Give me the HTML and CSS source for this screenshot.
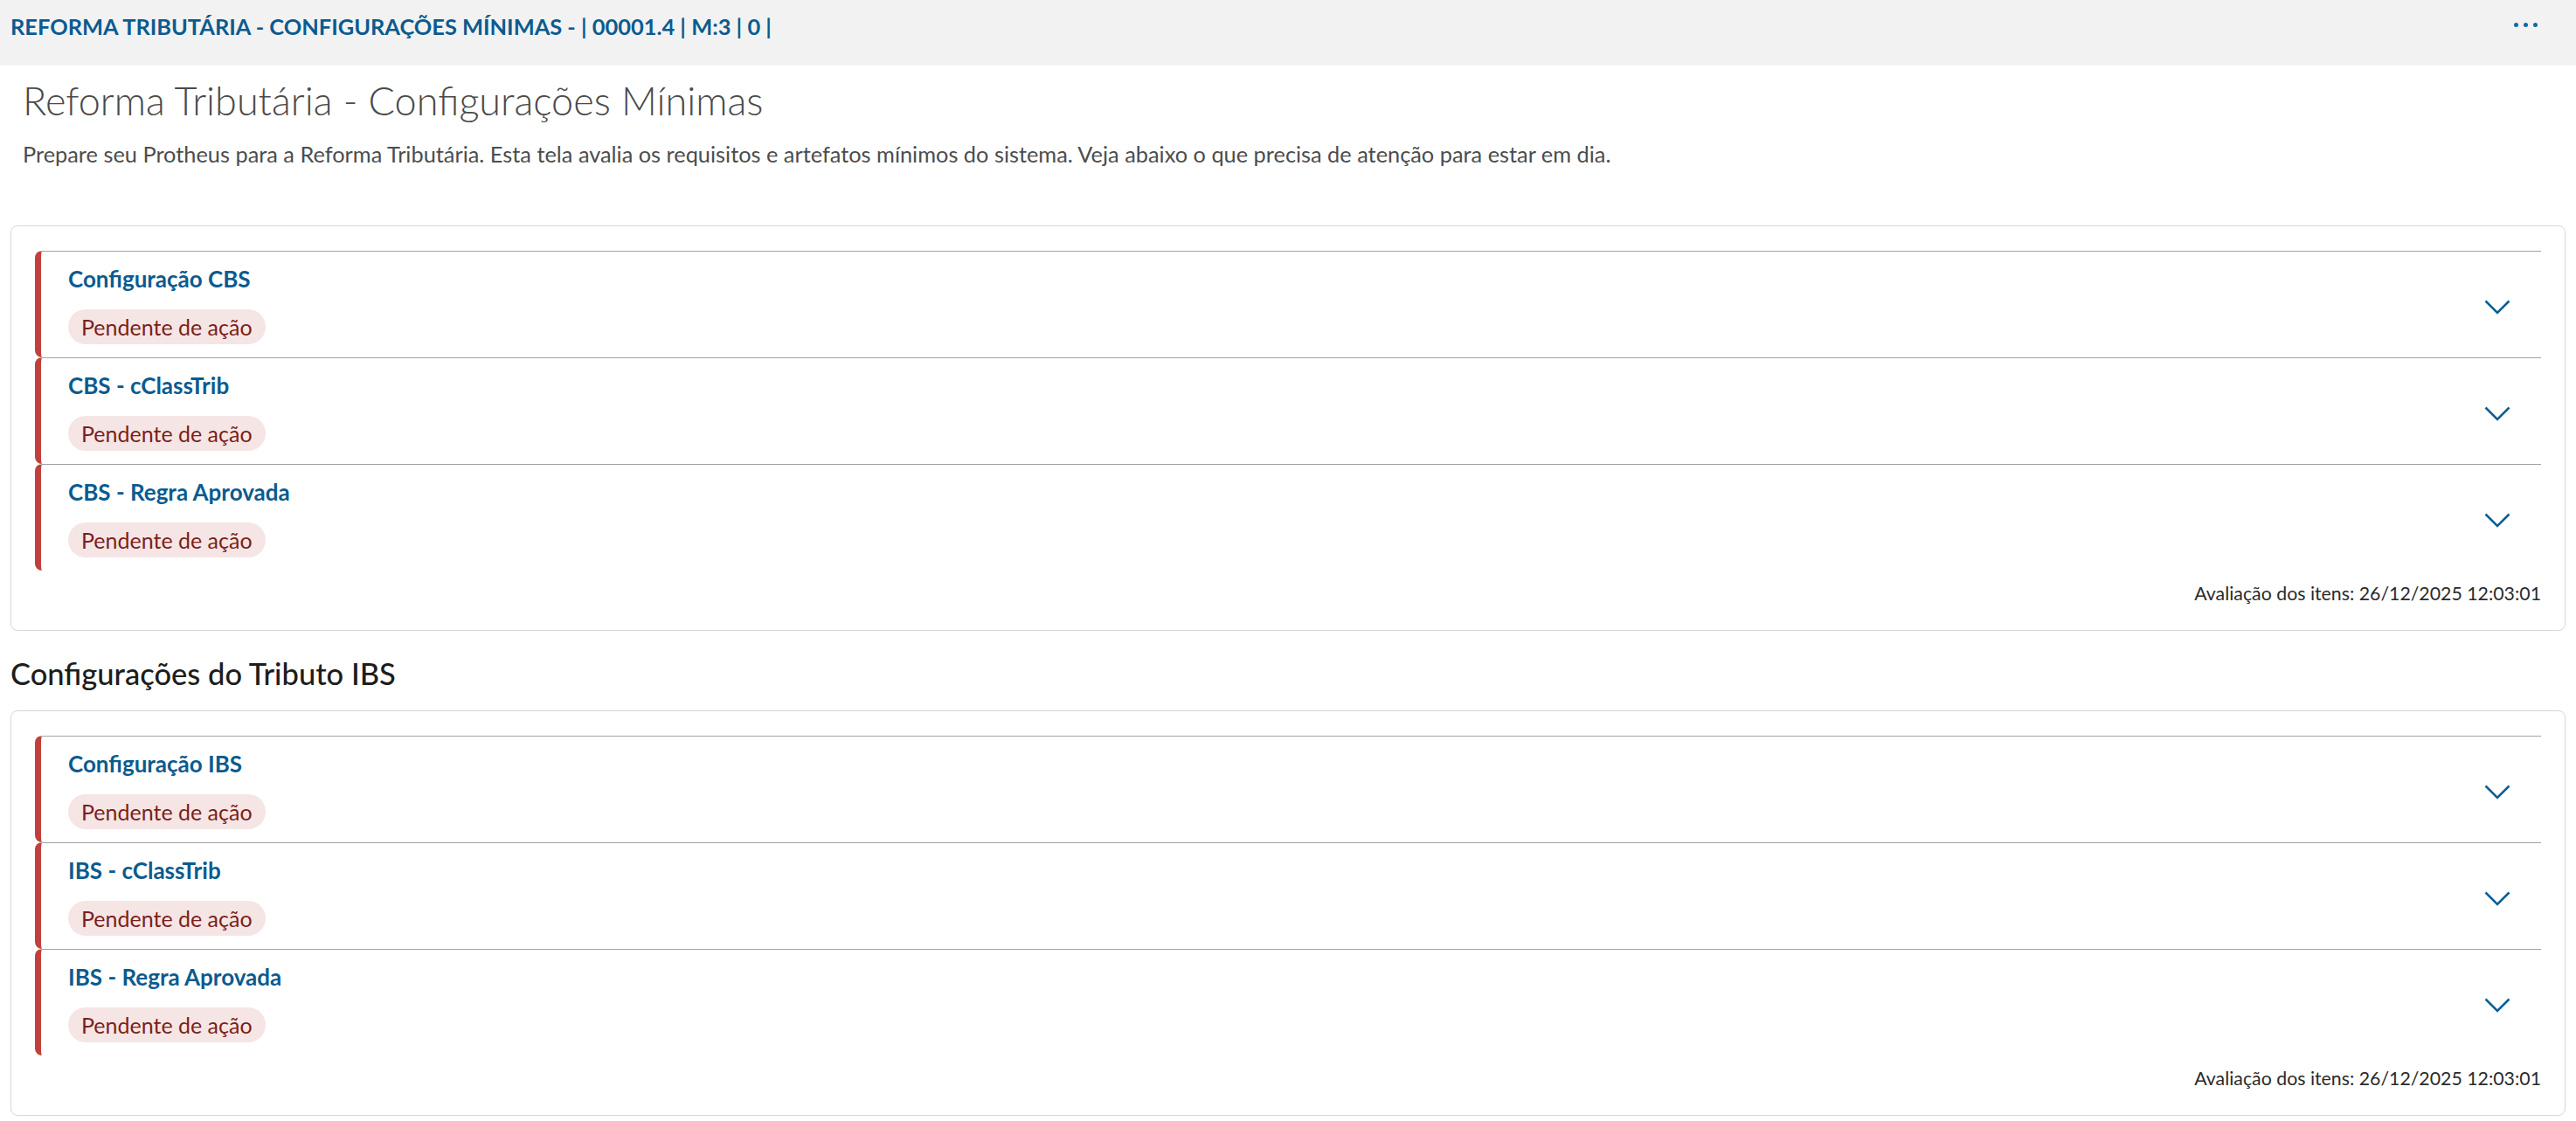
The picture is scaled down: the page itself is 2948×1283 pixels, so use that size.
FILE: index.html
```html
<!DOCTYPE html>
<html lang="pt-BR">
<head>
  <meta charset="UTF-8" />
  <meta name="viewport" content="width=device-width, initial-scale=1.0"/>
  <title>Reforma Tributária - Configurações Mínimas</title>
  <link rel="stylesheet" href="styles.css">
</head>
<body>
  <!-- Barra superior -->
  <div class="topbar">
    <span class="topbar-title">REFORMA TRIBUTÁRIA - CONFIGURAÇÕES MÍNIMAS - | 00001.4 | M:3 | 0 |</span>
    <button class="more" aria-label="Mais opções"><i></i><i></i><i></i></button>
  </div>

  <div class="page-head">
    <h1>Reforma Tributária - Configurações Mínimas</h1>
    <p>Prepare seu Protheus para a Reforma Tributária. Esta tela avalia os requisitos e artefatos mínimos do sistema. Veja abaixo o que precisa de atenção para estar em dia.</p>
  </div>

  <div class="content">
    <!-- CBS -->
    <div class="card">
      <div class="item">
        <div class="item-info">
          <h3>Configuração CBS</h3>
          <span class="tag">Pendente de ação</span>
        </div>
        <svg class="chevron" width="30" height="17" viewBox="0 0 30 17"><polyline points="1.5,1.5 15,15 28.5,1.5" /></svg>
      </div>
      <div class="item">
        <div class="item-info">
          <h3>CBS - cClassTrib</h3>
          <span class="tag">Pendente de ação</span>
        </div>
        <svg class="chevron" width="30" height="17" viewBox="0 0 30 17"><polyline points="1.5,1.5 15,15 28.5,1.5" /></svg>
      </div>
      <div class="item">
        <div class="item-info">
          <h3>CBS - Regra Aprovada</h3>
          <span class="tag">Pendente de ação</span>
        </div>
        <svg class="chevron" width="30" height="17" viewBox="0 0 30 17"><polyline points="1.5,1.5 15,15 28.5,1.5" /></svg>
      </div>
      <div class="card-footer">Avaliação dos itens: 26/12/2025 12:03:01</div>
    </div>

    <!-- IBS -->
    <h2>Configurações do Tributo IBS</h2>
    <div class="card">
      <div class="item">
        <div class="item-info">
          <h3>Configuração IBS</h3>
          <span class="tag">Pendente de ação</span>
        </div>
        <svg class="chevron" width="30" height="17" viewBox="0 0 30 17"><polyline points="1.5,1.5 15,15 28.5,1.5" /></svg>
      </div>
      <div class="item">
        <div class="item-info">
          <h3>IBS - cClassTrib</h3>
          <span class="tag">Pendente de ação</span>
        </div>
        <svg class="chevron" width="30" height="17" viewBox="0 0 30 17"><polyline points="1.5,1.5 15,15 28.5,1.5" /></svg>
      </div>
      <div class="item">
        <div class="item-info">
          <h3>IBS - Regra Aprovada</h3>
          <span class="tag">Pendente de ação</span>
        </div>
        <svg class="chevron" width="30" height="17" viewBox="0 0 30 17"><polyline points="1.5,1.5 15,15 28.5,1.5" /></svg>
      </div>
      <div class="card-footer">Avaliação dos itens: 26/12/2025 12:03:01</div>
    </div>
  </div>
</body>
</html>
```

FILE: styles.css
```css
:root {
  --primary: #0b5b8f;
  --danger: #c1403a;
  --tag-bg: #f6e5e5;
  --tag-text: #7a1f1c;
  --line: #a3a3a3;
  --card-border: #d7d7d7;
}

body {
  font-family: Lato, "Noto Sans", sans-serif;
  margin: 0;
  background: white;
  color: #333;
}

.topbar {
  height: 75px;
  box-sizing: border-box;
  background: #f2f2f2;
  display: flex;
  justify-content: space-between;
  align-items: flex-start;
  padding: 14px 44px 0 12px;
}

.topbar-title {
  color: var(--primary);
  font-size: 25.4px;
  font-weight: 700;
  line-height: 32px;
}

.more {
  display: flex;
  gap: 6px;
  background: none;
  border: none;
  padding: 12px 0 0;
  cursor: pointer;
}

.more i {
  width: 5px;
  height: 5px;
  border-radius: 50%;
  background: #0c6ca3;
}

.page-head {
  padding: 13px 26px 0;
}

.page-head h1 {
  margin: 0;
  font-size: 45px;
  font-weight: 300;
  line-height: 54px;
  color: #4a4a4a;
}

.page-head p {
  margin: 18px 0 0;
  font-size: 25.35px;
  line-height: 32px;
  color: #4d4d4d;
}

.content {
  padding: 66px 12px 0;
}

.card {
  border: 1px solid var(--card-border);
  border-radius: 8px;
  padding: 28px 27px;
}

.item {
  display: flex;
  justify-content: space-between;
  align-items: center;
  border-top: 1px solid var(--line);
  border-left: 7px solid var(--danger);
  border-radius: 8px 0 0 8px;
  padding: 15px 35px 15px 31px;
}

.item:last-of-type {
  border-bottom: 1px solid var(--line);
}

.item-info h3 {
  margin: 0 0 18px;
  font-size: 26px;
  font-weight: 700;
  line-height: 33px;
  color: var(--primary);
}

.tag {
  display: inline-block;
  background: var(--tag-bg);
  color: var(--tag-text);
  font-size: 25px;
  line-height: 40px;
  padding: 0 15px;
  border-radius: 20px;
}

.chevron {
  fill: none;
  stroke: #0c5f95;
  stroke-width: 2.6;
  margin-top: 6px;
}

.card-footer {
  margin-top: 12px;
  text-align: right;
  font-size: 21.3px;
  line-height: 28px;
  color: #2b2b2b;
}

.content h2 {
  margin: 29px 0 22px;
  font-size: 34.5px;
  font-weight: 500;
  line-height: 40px;
  color: #1d1d1d;
}
```
